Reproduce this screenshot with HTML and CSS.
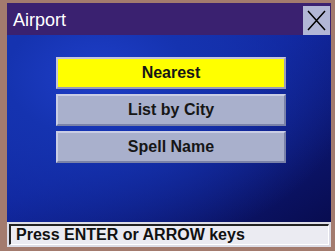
FILE: index.html
```html
<!DOCTYPE html>
<html>
<head>
<meta charset="utf-8">
<link rel="stylesheet" href="styles.css">
</head>
<body>
<div class="frame">
  <div class="window">
    <div class="titlebar">
      <span class="title">Airport</span>
      <div class="close">
        <svg width="27" height="29" viewBox="0 0 27 29"><path d="M5 5 L22 24 M22 5 L5 24" stroke="#000" stroke-width="1.5" fill="none"/></svg>
      </div>
    </div>
    <div class="body">
      <div class="menu">
        <div class="btn selected">Nearest</div>
        <div class="btn">List by City</div>
        <div class="btn">Spell Name</div>
      </div>
    </div>
    <div class="status"><div class="status-inner">Press ENTER or ARROW keys</div></div>
  </div>
</div>
</body>
</html>
```
FILE: styles.css
```css
html, body {
  margin: 0;
  padding: 0;
  width: 335px;
  height: 251px;
  overflow: hidden;
  background: #a37b6e;
  font-family: "Liberation Sans", Arial, sans-serif;
}
.frame {
  padding: 3px 4px 4px 7px;
  height: 244px;
}
.window {
  height: 244px;
  display: flex;
  flex-direction: column;
}
.titlebar {
  height: 32px;
  background: #3a2170;
  display: flex;
  align-items: center;
  justify-content: space-between;
}
.title {
  color: #fff;
  font-size: 18px;
  padding-left: 6px;
  padding-top: 2px;
}
.close {
  width: 27px;
  height: 29px;
  background: #b2b7d6;
  margin-right: 1px;
  margin-top: 2px;
}
.close svg { display: block; }
.body {
  flex: 1;
  background:
    radial-gradient(ellipse 260px 180px at 90px 40px, #1e3ec8 0%, #1533b0 35%, rgba(16,36,140,0) 100%),
    linear-gradient(150deg, #1634b2 0%, #10249a 45%, #0b1468 80%, #080c50 100%);
  padding-top: 22px;
}
.menu {
  margin-left: 49px;
  width: 230px;
  display: flex;
  flex-direction: column;
  gap: 5px;
}
.btn {
  height: 28px;
  line-height: 28px;
  text-align: center;
  font-weight: bold;
  font-size: 16px;
  color: #161616;
  background: #a9b0cc;
  border: 2px solid;
  border-color: #c9cde4 #7a82a8 #7a82a8 #c9cde4;
}
.btn.selected {
  background: #ffff00;
  border-color: #c4c4dc #9a9cb8 #9a9cb8 #c4c4dc;
}
.status {
  background: #dcdce6;
  padding: 2px;
  height: 21px;
  display: flex;
}
.status-inner {
  flex: 1;
  background: #ebebf2;
  border-top: 2px solid #222;
  border-left: 2px solid #222;
  border-right: 1px solid #fff;
  border-bottom: 1px solid #fff;
  font-weight: bold;
  font-size: 16px;
  line-height: 18px;
  color: #111;
  padding-left: 5px;
  white-space: nowrap;
  overflow: hidden;
}
```
